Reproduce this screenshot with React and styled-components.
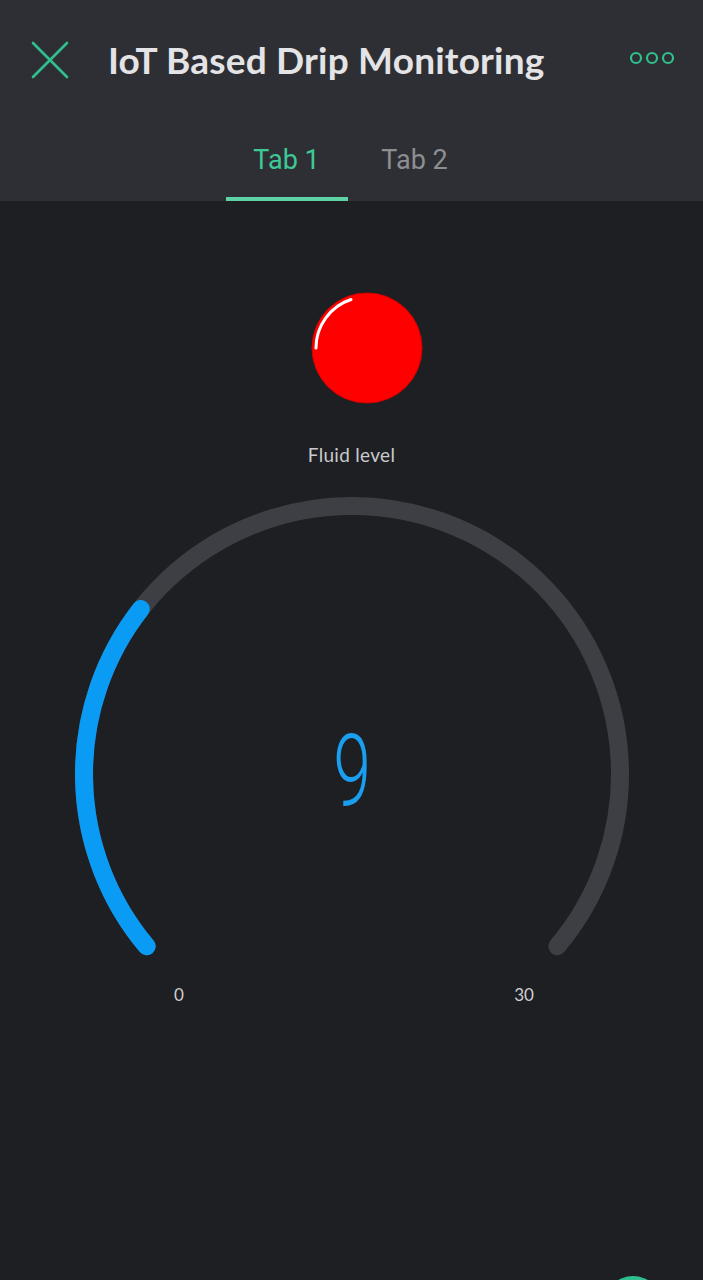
import React from 'react'
import styled, { createGlobalStyle } from 'styled-components'

const GlobalStyle = createGlobalStyle`
  html, body {
    margin: 0;
    padding: 0;
    background: #1e1f23;
  }
  body {
    font-family: Lato, "Noto Sans", sans-serif;
    overflow: hidden;
  }
`

const GREEN = '#2fc08c'

// gauge geometry
const CX = 280
const CY = 280
const R = 268
const START = 140
const SWEEP = 260

function polar(deg) {
  const a = (deg * Math.PI) / 180
  return [CX + R * Math.cos(a), CY + R * Math.sin(a)]
}

function arcPath(from, to) {
  const [x1, y1] = polar(from)
  const [x2, y2] = polar(to)
  const large = to - from > 180 ? 1 : 0
  return `M ${x1} ${y1} A ${R} ${R} 0 ${large} 1 ${x2} ${y2}`
}

function Gauge({ value, min, max }) {
  const end = START + (SWEEP * (value - min)) / (max - min)
  return (
    <GaugeWrap>
      <svg width="560" height="472" viewBox="0 0 560 472">
        <path d={arcPath(START, START + SWEEP)} fill="none" stroke="#3e3f44" strokeWidth="18" strokeLinecap="round" />
        <path d={arcPath(START, end)} fill="none" stroke="#0a9cf5" strokeWidth="18" strokeLinecap="round" />
      </svg>
      <Value>{value}</Value>
    </GaugeWrap>
  )
}

export default function App() {
  return (
    <Screen>
      <GlobalStyle />
      <Header>
        <TopBar>
          <IconButton aria-label="close">
            <svg width="38" height="38" viewBox="0 0 38 38">
              <path d="M2 2 L36 36 M36 2 L2 36" stroke={GREEN} strokeWidth="2.6" strokeLinecap="round" />
            </svg>
          </IconButton>
          <Title>IoT Based Drip Monitoring</Title>
          <Dots aria-label="menu">
            <svg width="46" height="14" viewBox="0 0 46 14">
              {[7, 23, 39].map(x => (
                <circle key={x} cx={x} cy="7" r="5" fill="none" stroke={GREEN} strokeWidth="2.2" />
              ))}
            </svg>
          </Dots>
        </TopBar>
        <Tabs>
          <Tab active>Tab 1</Tab>
          <Tab>Tab 2</Tab>
        </Tabs>
      </Header>

      <Body>
        <Led>
          <svg width="112" height="112" viewBox="0 0 112 112">
            <circle cx="56" cy="56" r="55" fill="#ff0000" stroke="#d60000" strokeWidth="1" />
            <path d="M5 56 A 51 51 0 0 1 40 7.5" fill="none" stroke="#ffffff" strokeWidth="3" strokeLinecap="round" />
          </svg>
        </Led>
        <Label>Fluid level</Label>
        <Gauge value={9} min={0} max={30} />
        <Scale>
          <span>0</span>
          <span>30</span>
        </Scale>
      </Body>
      <Fab />
    </Screen>
  )
}

const Screen = styled.div`
  position: relative;
  width: 703px;
  height: 1280px;
  background: #1e1f23;
  overflow: hidden;
`

const Header = styled.div`
  background: #2e2f34;
  display: flex;
  flex-direction: column;
`

const TopBar = styled.div`
  height: 120px;
  display: flex;
  align-items: center;
  padding: 0 28px 0 31px;
`

const IconButton = styled.div`
  width: 38px;
  height: 38px;
  display: flex;
`

const Title = styled.h1`
  flex: 1;
  margin: 0 0 0 39px;
  padding-bottom: 2px;
  font-family: Lato, "Noto Sans", sans-serif;
  font-weight: 700;
  font-size: 37px;
  letter-spacing: 0.2px;
  color: #e4e4e6;
`

const Dots = styled.div`
  display: flex;
  margin-top: -4px;
`

const Tabs = styled.div`
  height: 81px;
  display: flex;
  justify-content: center;
  padding-right: 2px;
`

const Tab = styled.div`
  width: 122px;
  display: flex;
  align-items: center;
  justify-content: center;
  padding-top: 2px;
  font-family: Roboto, sans-serif;
  font-size: 27px;
  color: ${p => (p.active ? '#3cc996' : '#8d8e92')};
  border-bottom: 4px solid ${p => (p.active ? '#5ed3a6' : 'transparent')};
  border-radius: 3px 3px 0 0;
  margin: 0 3px;
`

const Body = styled.div`
  display: flex;
  flex-direction: column;
  align-items: center;
  padding-top: 91px;
`

const Led = styled.div`
  width: 112px;
  height: 112px;
  margin-left: 30px;
`

const Label = styled.div`
  margin-top: 39px;
  font-size: 19px;
  color: #c9cacd;
  letter-spacing: 0.3px;
`

const GaugeWrap = styled.div`
  position: relative;
  width: 560px;
  height: 472px;
  margin-top: 28px;
`

const Value = styled.div`
  position: absolute;
  left: 0;
  right: 0;
  top: 222px;
  text-align: center;
  font-family: Roboto, sans-serif;
  font-weight: 300;
  font-size: 100px;
  line-height: 110px;
  color: #1a9ff0;
  transform: scaleX(0.68);
`

const Scale = styled.div`
  width: 375px;
  display: flex;
  justify-content: space-between;
  margin-top: 18px;
  font-size: 17px;
  color: #d0d0d2;
  span {
    width: 30px;
    text-align: center;
  }
`

const Fab = styled.div`
  position: absolute;
  left: 604px;
  top: 1276px;
  width: 58px;
  height: 58px;
  border-radius: 50%;
  background: #2fbf8c;
`
